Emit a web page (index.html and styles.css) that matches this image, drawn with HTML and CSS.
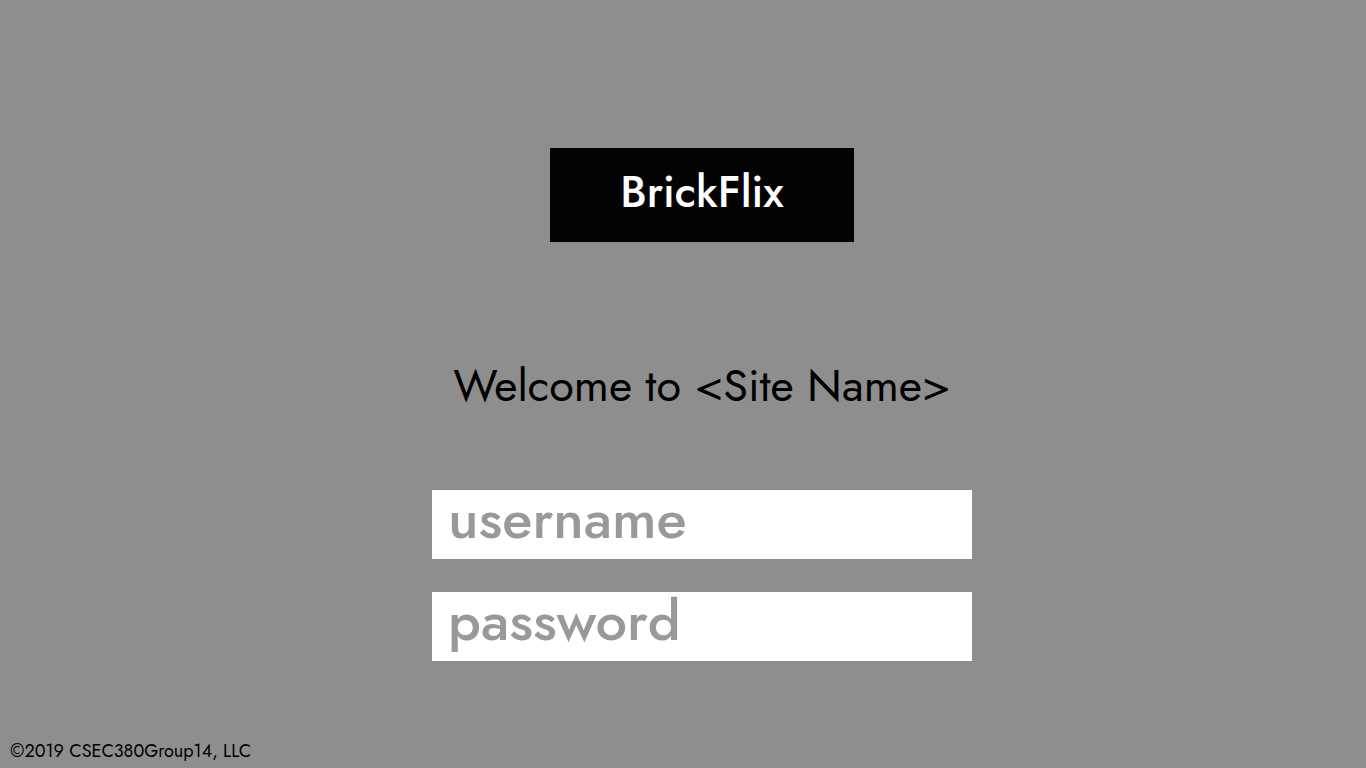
FILE: index.html
```
<!DOCTYPE html>
<html lang="en">
<head>
<meta charset="utf-8">
<title>BrickFlix</title>
<link rel="stylesheet" href="styles.css">
</head>
<body>
<main class="login">
  <div class="brand">BrickFlix</div>
  <h1 class="welcome">Welcome to &lt;Site Name&gt;</h1>
  <form class="form">
    <input class="field" type="text" name="username" placeholder="username" aria-label="username">
    <input class="field" type="password" name="password" placeholder="password" aria-label="password">
  </form>
</main>
<footer class="footer">©2019 CSEC380Group14, LLC</footer>
</body>
</html>
```
FILE: styles.css
```
* { box-sizing: border-box; }
body {
  margin: 0;
  min-height: 100vh;
  display: flex;
  flex-direction: column;
  background: #8e8e8e;
  color: #000;
  font-family: "Futura", "Jost", "Century Gothic", Lato, sans-serif;
}
.login {
  flex: 1;
  display: flex;
  flex-direction: column;
  align-items: center;
  padding: 148px 16px 16px 54px;
}
.brand {
  padding: 16px 70px 22px;
  background: #030303;
  color: #fff;
  font-size: 44px;
  line-height: 56px;
  font-weight: 500;
}
.welcome {
  margin: 116px 0 76px;
  font-size: 45px;
  line-height: 56px;
  font-weight: 400;
}
.form {
  width: 100%;
  max-width: 540px;
  display: flex;
  flex-direction: column;
  gap: 33px;
}
.field {
  width: 100%;
  height: 69px;
  padding: 0 16px 12px;
  border: 0;
  border-radius: 0;
  background: #fff;
  color: #000;
  font: inherit;
  font-size: 56px;
  font-weight: 500;
}
.field::placeholder { color: #999; opacity: 1; }
.footer {
  padding: 0 10px 5px;
  font-size: 18px;
  line-height: 24px;
}
```
